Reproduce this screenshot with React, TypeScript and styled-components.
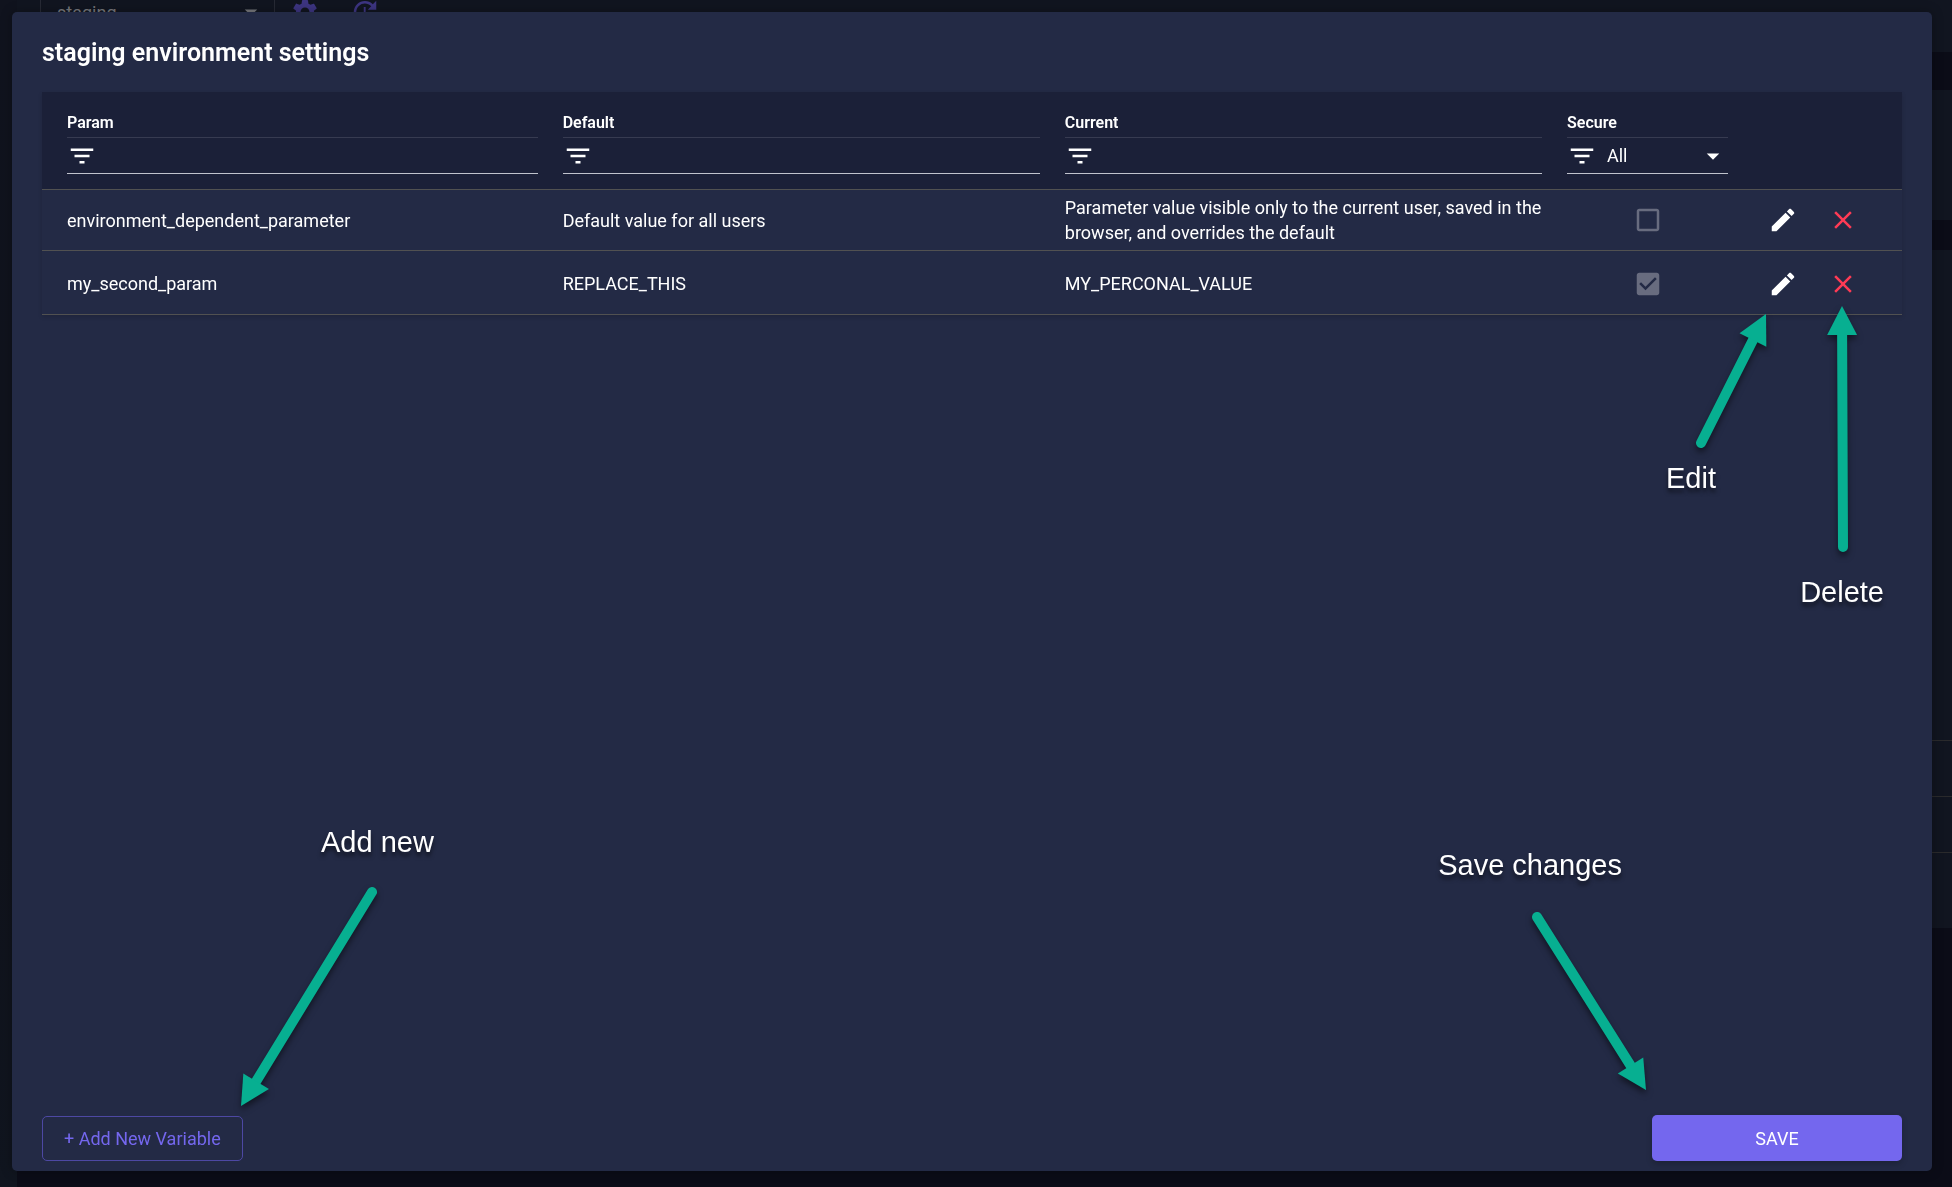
import React from "react";
import styled, { createGlobalStyle } from "styled-components";

const GlobalStyle = createGlobalStyle`
  *, *::before, *::after { box-sizing: border-box; }
  html, body, #root { height: 100%; }
  body {
    margin: 0;
    overflow: hidden;
    background: #0b0c17;
    color: #fff;
    font-family: Roboto, "Liberation Sans", sans-serif;
    font-size: 18px;
    line-height: 25px;
  }
  button, input, select { font: inherit; color: inherit; margin: 0; }
`;

/* Dimmed application behind the dialog */

const Backdrop = styled.div`
  display: flex;
  min-height: 100vh;
`;

const Sidebar = styled.div`
  width: 17px;
  background: linear-gradient(#10131e, #10131c 70%, #10151f);
`;

const Workspace = styled.div`
  flex: 1;
  display: flex;
  flex-direction: column;
`;

const TopBar = styled.header`
  display: flex;
  align-items: flex-start;
  height: 52px;
  padding-left: 23px;
  background: #111520;
`;

const EnvironmentPicker = styled.label`
  display: flex;
  align-items: center;
  width: 235px;
  height: 24px;
  padding: 0 8px 0 16px;
  border: solid #272a35;
  border-width: 0 1px;
  color: #77787c;
`;

const EnvironmentSelect = styled.select`
  flex: 1;
  height: 25px;
  padding: 0;
  border: 0;
  appearance: none;
  background: transparent;
`;

const BarButton = styled.button`
  display: flex;
  align-items: center;
  width: 60px;
  height: 24px;
  padding: 0 15px;
  border: 0;
  background: transparent;
  color: #3d3582;
`;

const BackPanel = styled.section<{ $height: number; $gap: number }>`
  height: ${(p) => p.$height}px;
  margin-top: ${(p) => p.$gap}px;
  background: #111520;
`;

const BackRows = styled.div`
  padding-top: 490px;
`;

const BackRow = styled.div`
  height: 56px;
  border-top: 1px solid #2a2a2c;
`;

/* Dialog */

const Overlay = styled.div`
  position: fixed;
  inset: 0;
  display: flex;
  padding: 12px 20px 16px 12px;
`;

const Dialog = styled.section`
  position: relative;
  flex: 1;
  display: flex;
  flex-direction: column;
  padding: 25px 30px 10px;
  border-radius: 5px;
  background: #232a45;
  box-shadow: 0 0 12px rgba(0, 0, 0, 0.3);
`;

const Title = styled.h1`
  margin: 0 0 23px;
  font-size: 25px;
  font-weight: 600;
  line-height: 32px;
`;

const Content = styled.div`
  flex: 1;
`;

const Table = styled.table`
  width: 100%;
  table-layout: fixed;
  border-collapse: separate;
  border-spacing: 0;
  box-shadow: 0 2px 4px rgba(0, 0, 0, 0.14);
`;

const HeadCell = styled.th<{ $width?: string }>`
  width: ${(p) => p.$width ?? "auto"};
  height: 98px;
  padding: 18px 12px 15px 13px;
  border-bottom: 1px solid #515151;
  background: #1b2038;
  text-align: left;
  vertical-align: top;
  font-size: 16px;
  font-weight: 600;
  &:first-child { padding-left: 25px; }
`;

const HeadLabel = styled.div`
  height: 27px;
`;

const Filter = styled.label`
  display: flex;
  align-items: center;
  height: 37px;
  border-top: 1px solid #373b51;
  border-bottom: 1px solid #c0c3cd;
  font-size: 18px;
  font-weight: 400;
`;

const FilterInput = styled.input`
  flex: 1;
  min-width: 0;
  height: 32px;
  padding: 0 10px;
  border: 0;
  outline: 0;
  background: transparent;
`;

const FilterSelect = styled.select`
  flex: 1;
  min-width: 0;
  height: 32px;
  padding: 0 10px;
  border: 0;
  outline: 0;
  appearance: none;
  background: transparent;
`;

const Cell = styled.td`
  padding: 0 12px 0 13px;
  border-bottom: 1px solid #515151;
  &:first-child { padding-left: 25px; }
`;

const Row = styled.tr`
  height: 61px;
  &:last-child { height: 64px; }
  &:last-child ${Cell} { padding-top: 2px; }
`;

const CheckWrap = styled.label`
  display: grid;
  justify-content: center;
  color: #686c7f;
  > * { grid-area: 1 / 1; }
`;

const CheckInput = styled.input`
  width: 30px;
  height: 30px;
  appearance: none;
`;

const Actions = styled.div`
  display: flex;
`;

const IconButton = styled.button<{ $danger?: boolean }>`
  display: flex;
  align-items: center;
  justify-content: center;
  width: 60px;
  height: 60px;
  padding: 0;
  border: 0;
  background: transparent;
  color: ${(p) => (p.$danger ? "#ff3b55" : "#fff")};
`;

const Footer = styled.footer`
  display: flex;
  align-items: flex-end;
  justify-content: space-between;
`;

const AddButton = styled.button`
  height: 45px;
  padding: 0 21px;
  border: 1px solid #4d48a3;
  border-radius: 5px;
  background: transparent;
  color: #7467ee;
`;

const SaveButton = styled.button`
  width: 250px;
  height: 46px;
  border: 0;
  border-radius: 5px;
  background: #7467ee;
  box-shadow: 0 3px 6px rgba(0, 0, 0, 0.2);
`;

/* Callouts drawn over the dialog */

type Anchor = { top?: number; right?: number; bottom?: number; left?: number };

const anchored = ({ $at }: { $at: Anchor }) =>
  Object.entries($at)
    .map(([side, value]) => `${side}: ${value}px;`)
    .join(" ");

const CalloutText = styled.span<{ $at: Anchor }>`
  position: absolute;
  ${anchored}
  font-family: "Liberation Sans", Arial, sans-serif;
  font-size: 29px;
  line-height: 34px;
  white-space: nowrap;
  text-shadow: 0 4px 4px rgba(0, 0, 0, 0.55);
  pointer-events: none;
`;

const ArrowSvg = styled.svg<{ $at: Anchor }>`
  position: absolute;
  ${anchored}
  overflow: visible;
  pointer-events: none;
  filter: drop-shadow(0 4px 3px rgba(0, 0, 0, 0.5));
`;

type Point = [number, number];

function Arrow({ at, from, to }: { at: Anchor; from: Point; to: Point }) {
  const length = Math.hypot(to[0] - from[0], to[1] - from[1]);
  const ux = (to[0] - from[0]) / length;
  const uy = (to[1] - from[1]) / length;
  const bx = to[0] - ux * 29;
  const by = to[1] - uy * 29;
  const head = [
    to,
    [bx - uy * 15, by + ux * 15],
    [bx + uy * 15, by - ux * 15],
  ];
  return (
    <ArrowSvg
      $at={at}
      width={Math.max(from[0], to[0])}
      height={Math.max(from[1], to[1])}
      aria-hidden="true"
    >
      <line x1={from[0]} y1={from[1]} x2={bx} y2={by} stroke="#07af91" strokeWidth="10" strokeLinecap="round" />
      <polygon points={head.map((p) => p.join(",")).join(" ")} fill="#07af91" />
    </ArrowSvg>
  );
}

const icons = {
  filter: "M10 18h4v-2h-4v2zM3 6v2h18V6H3zm3 7h12v-2H6v2z",
  caret: "M7 10l5 5 5-5z",
  edit: "M3 17.25V21h3.75L17.81 9.94l-3.75-3.75L3 17.25zM20.71 7.04c.39-.39.39-1.02 0-1.41l-2.34-2.34c-.39-.39-1.02-.39-1.41 0l-1.83 1.83 3.75 3.75 1.83-1.83z",
  close: "M19 6.41L17.59 5 12 10.59 6.41 5 5 6.41 10.59 12 5 17.59 6.41 19 12 13.41 17.59 19 19 17.59 13.41 12z",
  unchecked: "M19 5v14H5V5h14m0-2H5c-1.1 0-2 .9-2 2v14c0 1.1.9 2 2 2h14c1.1 0 2-.9 2-2V5c0-1.1-.9-2-2-2z",
  checked: "M19 3H5c-1.11 0-2 .9-2 2v14c0 1.1.89 2 2 2h14c1.11 0 2-.9 2-2V5c0-1.1-.89-2-2-2zm-9 14l-5-5 1.41-1.41L10 14.17l7.59-7.59L19 8l-9 9z",
  gear: "M19.14 12.94c.04-.3.06-.61.06-.94 0-.32-.02-.64-.07-.94l2.03-1.58c.18-.14.23-.41.12-.61l-1.92-3.32c-.12-.22-.37-.29-.59-.22l-2.39.96c-.5-.38-1.03-.7-1.62-.94l-.36-2.54c-.04-.24-.24-.41-.48-.41h-3.84c-.24 0-.43.17-.47.41l-.36 2.54c-.59.24-1.13.57-1.62.94l-2.39-.96c-.22-.08-.47 0-.59.22L2.74 8.87c-.12.21-.08.47.12.61l2.03 1.58c-.05.3-.09.63-.09.94s.02.64.07.94l-2.03 1.58c-.18.14-.23.41-.12.61l1.92 3.32c.12.22.37.29.59.22l2.39-.96c.5.38 1.03.7 1.62.94l.36 2.54c.05.24.24.41.48.41h3.84c.24 0 .44-.17.47-.41l.36-2.54c.59-.24 1.13-.56 1.62-.94l2.39.96c.22.08.47 0 .59-.22l1.92-3.32c.12-.22.07-.47-.12-.61l-2.01-1.58zM12 15.6c-1.98 0-3.6-1.62-3.6-3.6s1.62-3.6 3.6-3.6 3.6 1.62 3.6 3.6-1.62 3.6-3.6 3.6z",
  update: "M21 10.12h-6.78l2.74-2.82c-2.73-2.7-7.15-2.8-9.88-.1-2.73 2.71-2.73 7.08 0 9.79s7.15 2.71 9.88 0C18.32 15.65 19 14.08 19 12.1h2c0 1.98-.88 4.55-2.64 6.29-3.51 3.48-9.21 3.48-12.72 0-3.5-3.47-3.53-9.11-.02-12.58s9.14-3.47 12.65 0L21 3v7.12zM12.5 8v4.25l3.5 2.08-.72 1.21L11 13V8h1.5z",
};

const Glyph = styled.svg`
  flex: none;
  width: 30px;
  height: 30px;
  fill: currentColor;
`;

function Icon({ name }: { name: keyof typeof icons }) {
  return (
    <Glyph viewBox="0 0 24 24" aria-hidden="true">
      <path d={icons[name]} />
    </Glyph>
  );
}

const params = [
  {
    name: "environment_dependent_parameter",
    initial: "Default value for all users",
    current:
      "Parameter value visible only to the current user, saved in the browser, and overrides the default",
    secure: false,
  },
  {
    name: "my_second_param",
    initial: "REPLACE_THIS",
    current: "MY_PERCONAL_VALUE",
    secure: true,
  },
];

function TextColumn({ title, width }: { title: string; width?: string }) {
  return (
    <HeadCell scope="col" $width={width}>
      <HeadLabel>{title}</HeadLabel>
      <Filter>
        <Icon name="filter" />
        <FilterInput type="text" aria-label={`Filter by ${title}`} />
      </Filter>
    </HeadCell>
  );
}

export default function App() {
  return (
    <>
      <GlobalStyle />
      <Backdrop>
        <Sidebar />
        <Workspace>
          <TopBar>
            <EnvironmentPicker>
              <EnvironmentSelect aria-label="Environment">
                <option>staging</option>
              </EnvironmentSelect>
              <Icon name="caret" />
            </EnvironmentPicker>
            <BarButton type="button" aria-label="Environment settings">
              <Icon name="gear" />
            </BarButton>
            <BarButton type="button" aria-label="Reload">
              <Icon name="update" />
            </BarButton>
          </TopBar>
          <BackPanel $height={130} $gap={38} />
          <BackPanel $height={678} $gap={30}>
            <BackRows>
              <BackRow />
              <BackRow />
              <BackRow />
            </BackRows>
          </BackPanel>
        </Workspace>
      </Backdrop>

      <Overlay>
        <Dialog role="dialog" aria-labelledby="dialog-title">
          <Title id="dialog-title">staging environment settings</Title>
          <Content>
            <Table>
              <thead>
                <tr>
                  <TextColumn title="Param" />
                  <TextColumn title="Default" width="27%" />
                  <TextColumn title="Current" width="27%" />
                  <HeadCell scope="col" $width="186px">
                    <HeadLabel>Secure</HeadLabel>
                    <Filter>
                      <Icon name="filter" />
                      <FilterSelect aria-label="Filter by Secure">
                        <option>All</option>
                      </FilterSelect>
                      <Icon name="caret" />
                    </Filter>
                  </HeadCell>
                  <HeadCell scope="col" $width="162px" aria-label="Actions" />
                </tr>
              </thead>
              <tbody>
                {params.map((p) => (
                  <Row key={p.name}>
                    <Cell>{p.name}</Cell>
                    <Cell>{p.initial}</Cell>
                    <Cell>{p.current}</Cell>
                    <Cell>
                      <CheckWrap>
                        <CheckInput
                          type="checkbox"
                          checked={p.secure}
                          disabled
                          readOnly
                          aria-label={`${p.name} is secure`}
                        />
                        <Icon name={p.secure ? "checked" : "unchecked"} />
                      </CheckWrap>
                    </Cell>
                    <Cell>
                      <Actions>
                        <IconButton type="button" aria-label={`Edit ${p.name}`}>
                          <Icon name="edit" />
                        </IconButton>
                        <IconButton type="button" $danger aria-label={`Delete ${p.name}`}>
                          <Icon name="close" />
                        </IconButton>
                      </Actions>
                    </Cell>
                  </Row>
                ))}
              </tbody>
            </Table>
          </Content>
          <Footer>
            <AddButton type="button">+ Add New Variable</AddButton>
            <SaveButton type="button">SAVE</SaveButton>
          </Footer>

          <Arrow at={{ top: 302, right: 166 }} from={[0, 129]} to={[65, 0]} />
          <CalloutText $at={{ top: 449, right: 216 }}>Edit</CalloutText>
          <Arrow at={{ top: 294, right: 89 }} from={[1, 241]} to={[0, 0]} />
          <CalloutText $at={{ top: 563, right: 48 }}>Delete</CalloutText>
          <CalloutText $at={{ bottom: 312, left: 309 }}>Add new</CalloutText>
          <Arrow at={{ bottom: 65, left: 229 }} from={[131, 0]} to={[0, 214]} />
          <CalloutText $at={{ bottom: 289, right: 310 }}>Save changes</CalloutText>
          <Arrow at={{ bottom: 81, right: 286 }} from={[0, 0]} to={[109, 173]} />
        </Dialog>
      </Overlay>
    </>
  );
}
